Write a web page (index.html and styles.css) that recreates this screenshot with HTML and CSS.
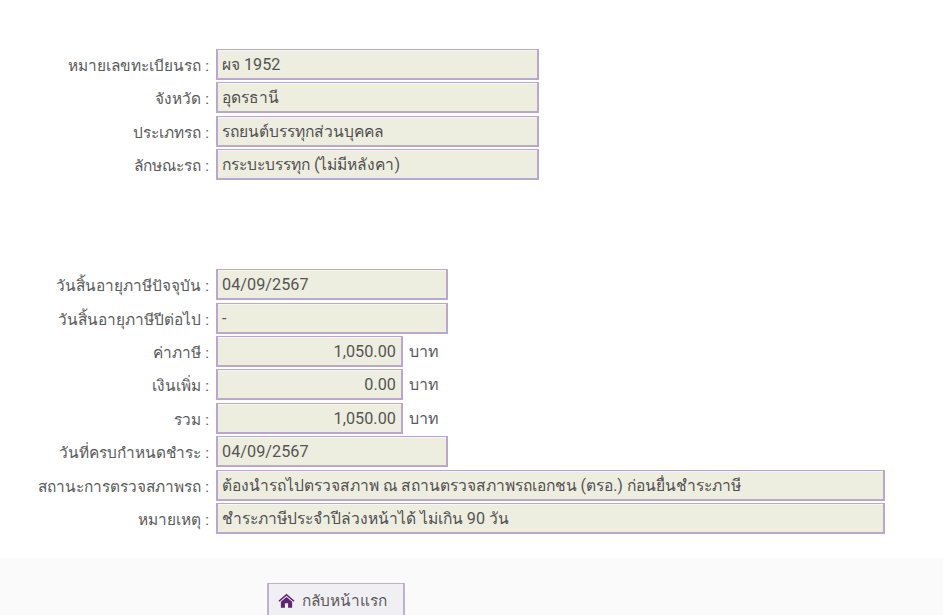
FILE: index.html
```html
<!DOCTYPE html>
<html lang="th">
<head>
<meta charset="utf-8">
<title>ข้อมูลรถ</title>
<link rel="stylesheet" href="styles.css">
</head>
<body>
<main class="content">
  <section class="group group-vehicle">
    <div class="row"><div class="label">หมายเลขทะเบียนรถ :</div><div class="field w-l"><p class="val">ผจ <span class="lat">1952</span></p></div></div>
    <div class="row"><div class="label">จังหวัด :</div><div class="field w-l"><p class="val">อุดรธานี</p></div></div>
    <div class="row"><div class="label">ประเภทรถ :</div><div class="field w-l"><p class="val">รถยนต์บรรทุกส่วนบุคคล</p></div></div>
    <div class="row"><div class="label">ลักษณะรถ :</div><div class="field w-l"><p class="val">กระบะบรรทุก <span class="lat">(</span>ไม่มีหลังคา<span class="lat">)</span></p></div></div>
  </section>
  <section class="group group-tax">
    <div class="row"><div class="label">วันสิ้นอายุภาษีปัจจุบัน :</div><div class="field w-m"><p class="val lat">04/09/2567</p></div></div>
    <div class="row"><div class="label">วันสิ้นอายุภาษีปีต่อไป :</div><div class="field w-m"><p class="val lat">-</p></div></div>
    <div class="row"><div class="label">ค่าภาษี :</div><div class="field w-s num"><p class="val lat">1,050.00</p></div><div class="unit">บาท</div></div>
    <div class="row"><div class="label">เงินเพิ่ม :</div><div class="field w-s num"><p class="val lat">0.00</p></div><div class="unit">บาท</div></div>
    <div class="row"><div class="label">รวม :</div><div class="field w-s num"><p class="val lat">1,050.00</p></div><div class="unit">บาท</div></div>
    <div class="row"><div class="label">วันที่ครบกำหนดชำระ :</div><div class="field w-m"><p class="val lat">04/09/2567</p></div></div>
    <div class="row"><div class="label">สถานะการตรวจสภาพรถ :</div><div class="field w-xl"><p class="val">ต้องนำรถไปตรวจสภาพ ณ สถานตรวจสภาพรถเอกชน <span class="lat">(</span>ตรอ.<span class="lat">)</span> ก่อนยื่นชำระภาษี</p></div></div>
    <div class="row"><div class="label">หมายเหตุ :</div><div class="field w-xl"><p class="val">ชำระภาษีประจำปีล่วงหน้าได้ ไม่เกิน <span class="lat">90</span> วัน</p></div></div>
  </section>
</main>
<footer class="footer">
  <a class="home-btn" href="#">
    <svg class="home-icon" viewBox="0 0 18 16" aria-hidden="true"><path d="M9 .8 17.6 8.2 16.5 9.3 9 3 1.5 9.3.4 8.2Z"/><path d="M3 9.2 9 4.2 15 9.2V15.6H10.7V11H7.3V15.6H3Z"/></svg>
    <span>กลับหน้าแรก</span>
  </a>
</footer>
</body>
</html>
```
FILE: styles.css
```css
* { box-sizing: border-box; }
html, body { margin: 0; padding: 0; }
body {
  width: 943px;
  height: 615px;
  overflow: hidden;
  background: #fff;
  font-family: Roboto, "Noto Sans", "Liberation Sans", sans-serif;
  font-size: 15.4px;
  color: #5a5a5a;
}
.content { height: 558px; padding-top: 49px; }
.group { display: flex; flex-direction: column; gap: 2.4px; }
.group-tax { margin-top: 89px; }
.row { display: flex; align-items: center; height: 31px; }
.label {
  width: 209px;
  margin-right: 7px;
  padding-top: 2px;
  text-align: right;
  white-space: nowrap;
}
.field {
  height: 31px;
  padding: 1px 5px 0 4px;
  display: flex;
  align-items: center;
  white-space: nowrap;
  background: #eeeee0;
  border: 2px solid #b9a8cc;
  border-top-width: 1px;
  box-shadow: inset 0 1px 0 #f8f6f5;
  font-size: 15.6px;
  color: #505050;
}
.val { margin: 0; }
.lat { font-size: 16.2px; letter-spacing: .05px; color: #555; }
.w-l { width: 323px; }
.w-m { width: 232px; }
.w-s { width: 187px; }
.w-xl { width: 669px; }
.num { justify-content: flex-end; }
.unit { margin-left: 6px; font-size: 16px; }
.footer {
  height: 57px;
  background: #fafafa;
  padding: 25px 0 0 267px;
}
.home-btn {
  display: flex;
  align-items: center;
  gap: 7px;
  width: 138px;
  height: 34px;
  padding-left: 9px;
  background: #f0eff3;
  border: 2px solid #bfafd1;
  border-top-width: 1px;
  border-bottom: 0;
  text-decoration: none;
  color: #5a5a5a;
}
.home-icon { width: 17px; height: 15px; fill: #5f2472; flex: none; }
```
